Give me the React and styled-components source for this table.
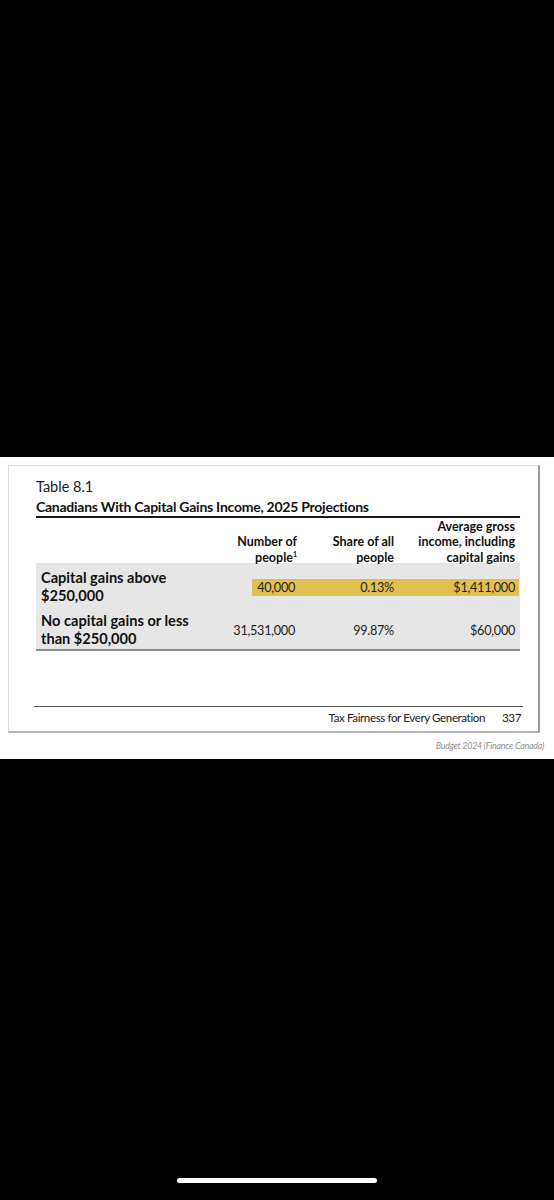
import styled, { createGlobalStyle } from "styled-components";

const GlobalStyle = createGlobalStyle`
  html, body {
    margin: 0;
    padding: 0;
    background: #000;
  }
  body {
    font-family: Lato, "Open Sans", sans-serif;
  }
`;

// Whole phone screen, black around the screenshot of the page
const Screen = styled.div`
  width: 554px;
  height: 1200px;
  background: #000;
  display: flex;
  flex-direction: column;
`;

const TopSpace = styled.div`
  height: 457px;
  flex: none;
`;

const Sheet = styled.div`
  background: #fff;
  height: 302px;
  padding: 8px 0 0 8px;
  box-sizing: border-box;
  flex: none;
`;

const Page = styled.div`
  width: 532px;
  height: 268px;
  box-sizing: border-box;
  border: 1px solid #dcdcdc;
  border-right: 2px solid #9a9a9a;
  border-bottom: 2px solid #b4b4b4;
  padding-top: 12px;
`;

const Content = styled.div`
  margin: 0 18px 0 27px;
  color: #1a1a1a;
`;

const Label = styled.div`
  font-size: 14.5px;
  line-height: 18px;
  margin-bottom: 2px;
`;

const Title = styled.div`
  font-size: 14px;
  font-weight: 700;
  line-height: 18px;
  letter-spacing: -0.25px;
  border-bottom: 2px solid #1a1a1a;
  color: #111;
`;

const Grid = styled.div`
  display: grid;
  grid-template-columns: 174px 91px 97px 122px;
`;

const Head = styled(Grid)`
  height: 45px;
  font-size: 12.5px;
  font-weight: 700;
  line-height: 15.5px;
  color: #111;
`;

const HeadCell = styled.div`
  align-self: end;
  margin-bottom: -2px;
  text-align: right;
  padding-right: ${(p) => p.$pad || 4}px;

  sup {
    font-size: 7px;
    line-height: 0;
    vertical-align: 5px;
  }
`;

const Body = styled.div`
  background: #e6e6e6;
  border-bottom: 2px solid #8c8c8c;
`;

const Row = styled(Grid)`
  height: 43px;
  box-sizing: border-box;
  padding: 6px 0 1px;
  align-items: center;
`;

const RowLabel = styled.div`
  align-self: start;
  padding-left: 5px;
  font-size: 14.6px;
  font-weight: 700;
  line-height: 18px;
  color: #111;
`;

const Values = styled.div`
  grid-column: 2 / 5;
  display: grid;
  grid-template-columns: 91px 97px 122px;
  height: 17px;
  align-items: center;
  background: ${(p) =>
    p.$marked ? "linear-gradient(90deg, transparent 42px, #e2c050 42px)" : "none"};
  margin-right: 1px;
`;

const Value = styled.div`
  text-align: right;
  padding-right: ${(p) => p.$pad}px;
  font-size: 12.7px;
  letter-spacing: -0.3px;
  line-height: 17px;
  color: #1e1e1e;
`;

const Footer = styled.div`
  margin: 55px 0 0 25px;
  width: 489px;
  border-top: 1.5px solid #555;
  display: flex;
  justify-content: flex-end;
  gap: 17px;
  padding-right: 2px;
  box-sizing: border-box;
  font-size: 11.6px;
  letter-spacing: -0.4px;
  line-height: 21px;
  color: #1a1a1a;
`;

const Caption = styled.div`
  width: 536px;
  text-align: right;
  margin-top: 6px;
  font-size: 8.8px;
  letter-spacing: -0.2px;
  font-style: italic;
  color: #8e8e8e;
  line-height: 14px;
`;

const Filler = styled.div`
  flex: 1;
`;

const HomeBar = styled.div`
  width: 200px;
  height: 5px;
  border-radius: 3px;
  background: #fff;
  margin: 0 0 17px 177px;
  flex: none;
`;

const pads = [6, 4, 5];

const rows = [
  { label: ["Capital gains above", "$250,000"], values: ["40,000", "0.13%", "$1,411,000"], marked: true },
  { label: ["No capital gains or less", "than $250,000"], values: ["31,531,000", "99.87%", "$60,000"] },
];

const App = () => {
  return (
    <>
      <GlobalStyle />
      <Screen>
        <TopSpace />
        <Sheet>
          <Page>
            <Content>
              <Label>Table 8.1</Label>
              <Title>Canadians With Capital Gains Income, 2025 Projections</Title>
              <Head>
                <div />
                <HeadCell $pad={4}>
                  Number of
                  <br />
                  people<sup>1</sup>
                </HeadCell>
                <HeadCell $pad={4}>
                  Share of all
                  <br />
                  people
                </HeadCell>
                <HeadCell $pad={5}>
                  Average gross
                  <br />
                  income, including
                  <br />
                  capital gains
                </HeadCell>
              </Head>
              <Body>
                {rows.map((r) => (
                  <Row key={r.label[0]}>
                    <RowLabel>
                      {r.label[0]}
                      <br />
                      {r.label[1]}
                    </RowLabel>
                    <Values $marked={r.marked}>
                      {r.values.map((v, i) => (
                        <Value key={v} $pad={pads[i]}>
                          {v}
                        </Value>
                      ))}
                    </Values>
                  </Row>
                ))}
              </Body>
            </Content>
            <Footer>
              <span>Tax Fairness for Every Generation</span>
              <span>337</span>
            </Footer>
          </Page>
          <Caption>Budget 2024 (Finance Canada)</Caption>
        </Sheet>
        <Filler />
        <HomeBar />
      </Screen>
    </>
  );
};

export default App;
